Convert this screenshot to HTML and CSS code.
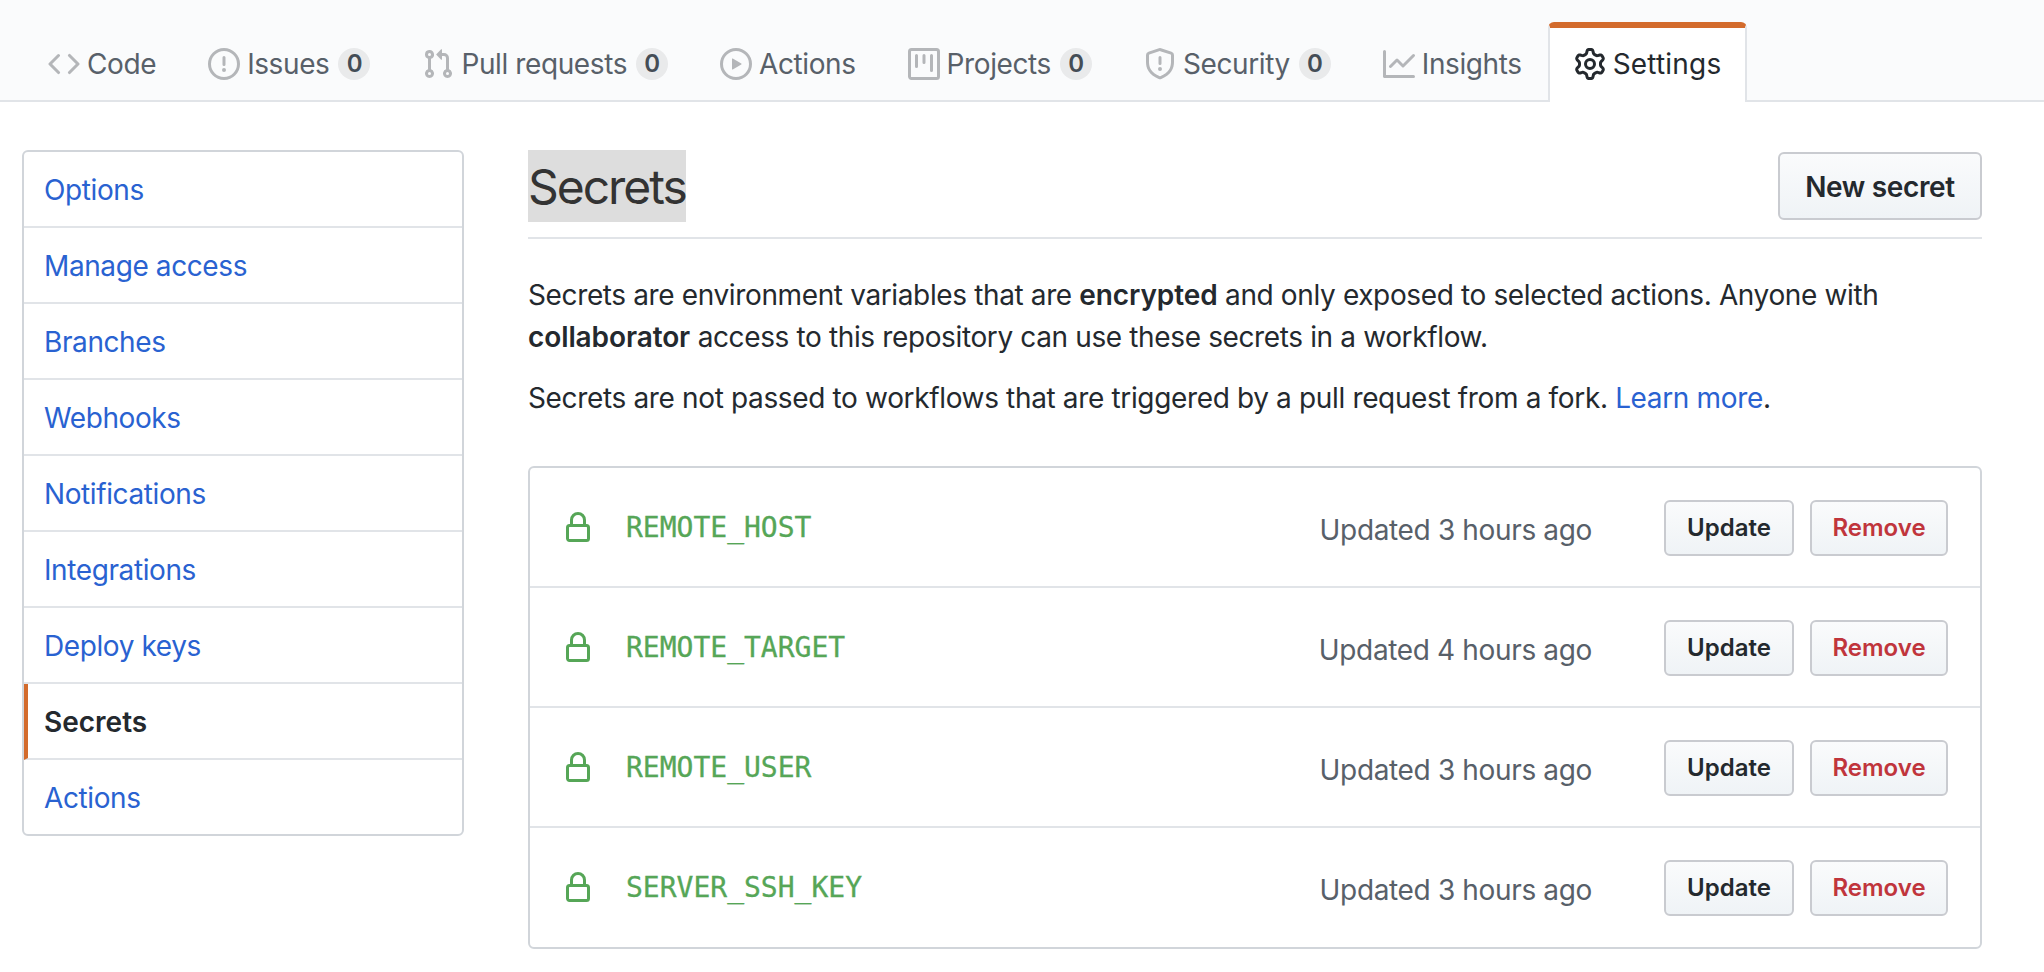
FILE: index.html
```html
<!DOCTYPE html>
<html lang="en">
<head>
<meta charset="utf-8">
<title>Secrets</title>
<link rel="stylesheet" href="styles.css">
</head>
<body>
<svg class="defs" aria-hidden="true"><symbol id="lock" viewBox="0 0 16 16"><path fill-rule="evenodd" d="M4 4v2h-.25A1.75 1.75 0 002 7.75v5.5c0 .966.784 1.75 1.75 1.75h8.5A1.75 1.75 0 0014 13.25v-5.5A1.75 1.75 0 0012.25 6H12V4a4 4 0 10-8 0zm6.5 2V4a2.5 2.5 0 00-5 0v2h5zM12 7.5h.25a.25.25 0 01.25.25v5.5a.25.25 0 01-.25.25h-8.5a.25.25 0 01-.25-.25v-5.5a.25.25 0 01.25-.25H12z"/></symbol></svg>
<nav class="tabs">
  <a class="tab"><svg class="ticon" viewBox="0 0 16 16"><path fill-rule="evenodd" d="M4.72 3.22a.75.75 0 011.06 1.06L2.06 8l3.72 3.72a.75.75 0 11-1.06 1.06L.47 8.53a.75.75 0 010-1.06l4.25-4.25zm6.56 0a.75.75 0 10-1.06 1.06L13.94 8l-3.72 3.72a.75.75 0 101.06 1.06l4.25-4.25a.75.75 0 000-1.06l-4.25-4.25z"/></svg>Code</a>
  <a class="tab"><svg class="ticon" viewBox="0 0 16 16"><path fill-rule="evenodd" d="M8 1.5a6.5 6.5 0 100 13 6.5 6.5 0 000-13zM0 8a8 8 0 1116 0A8 8 0 010 8zm9 3a1 1 0 11-2 0 1 1 0 012 0zm-.25-6.25a.75.75 0 00-1.5 0v3.5a.75.75 0 001.5 0v-3.5z"/></svg>Issues<span class="count">0</span></a>
  <a class="tab"><svg class="ticon" viewBox="0 0 16 16"><path fill-rule="evenodd" d="M7.177 3.073L9.573.677A.25.25 0 0110 .854v4.792a.25.25 0 01-.427.177L7.177 3.427a.25.25 0 010-.354zM3.75 2.5a.75.75 0 100 1.5.75.75 0 000-1.5zm-2.25.75a2.25 2.25 0 113 2.122v5.256a2.251 2.251 0 11-1.5 0V5.372A2.25 2.25 0 011.5 3.25zM11 2.5h-1V4h1a1 1 0 011 1v5.628a2.251 2.251 0 101.5 0V5A2.5 2.5 0 0011 2.5zm1 10.25a.75.75 0 111.5 0 .75.75 0 01-1.5 0zM3.75 12a.75.75 0 100 1.5.75.75 0 000-1.5z"/></svg>Pull requests<span class="count">0</span></a>
  <a class="tab"><svg class="ticon" viewBox="0 0 16 16"><path fill-rule="evenodd" d="M1.5 8a6.5 6.5 0 1113 0 6.5 6.5 0 01-13 0zM8 0a8 8 0 100 16A8 8 0 008 0zM6.379 5.227A.25.25 0 006 5.442v5.117a.25.25 0 00.379.214l4.264-2.559a.25.25 0 000-.428L6.379 5.227z"/></svg>Actions</a>
  <a class="tab"><svg class="ticon" viewBox="0 0 16 16"><path fill-rule="evenodd" d="M1.75 0A1.75 1.75 0 000 1.75v12.5C0 15.216.784 16 1.75 16h12.5A1.75 1.75 0 0016 14.25V1.75A1.75 1.75 0 0014.25 0H1.75zM1.5 1.75a.25.25 0 01.25-.25h12.5a.25.25 0 01.25.25v12.5a.25.25 0 01-.25.25H1.75a.25.25 0 01-.25-.25V1.75zM11.75 3a.75.75 0 00-.75.75v7.5a.75.75 0 001.5 0v-7.5a.75.75 0 00-.75-.75zm-8.25.75a.75.75 0 011.5 0v5.5a.75.75 0 01-1.5 0v-5.5zM8 3a.75.75 0 00-.75.75v3.5a.75.75 0 001.5 0v-3.5A.75.75 0 008 3z"/></svg>Projects<span class="count">0</span></a>
  <a class="tab"><svg class="ticon" viewBox="0 0 16 16"><path fill-rule="evenodd" d="M7.467.133a1.75 1.75 0 011.066 0l5.25 1.68A1.75 1.75 0 0115 3.48V7c0 1.566-.32 3.182-1.303 4.682-.983 1.498-2.585 2.813-5.032 3.855a1.7 1.7 0 01-1.33 0c-2.447-1.042-4.049-2.357-5.032-3.855C1.32 10.182 1 8.566 1 7V3.48a1.75 1.75 0 011.217-1.667l5.25-1.68zm.61 1.429a.25.25 0 00-.153 0l-5.25 1.68a.25.25 0 00-.174.238V7c0 1.358.275 2.666 1.057 3.86.784 1.194 2.121 2.34 4.366 3.297a.2.2 0 00.154 0c2.245-.956 3.582-2.104 4.366-3.298C13.225 9.666 13.5 8.36 13.5 7V3.48a.25.25 0 00-.174-.237l-5.25-1.68zM9 10.5a1 1 0 11-2 0 1 1 0 012 0zm-.25-5.75a.75.75 0 10-1.5 0v3a.75.75 0 001.5 0v-3z"/></svg>Security<span class="count">0</span></a>
  <a class="tab"><svg class="ticon" viewBox="0 0 16 16"><path fill-rule="evenodd" d="M1.5 1.75a.75.75 0 00-1.5 0v12.5c0 .414.336.75.75.75h14.5a.75.75 0 000-1.5H1.5V1.75zm14.28 2.53a.75.75 0 00-1.06-1.06L10 7.94 7.53 5.47a.75.75 0 00-1.06 0L3.22 8.72a.75.75 0 001.06 1.06L7 7.06l2.47 2.47a.75.75 0 001.06 0l5.25-5.25z"/></svg>Insights</a>
  <a class="tab tab-active"><svg class="ticon" viewBox="0 0 16 16"><path fill-rule="evenodd" d="M7.429 1.525a6.593 6.593 0 011.142 0c.036.003.108.036.137.146l.289 1.105c.147.56.55.967.997 1.189.174.086.341.183.501.29.417.278.97.423 1.53.27l1.102-.303c.11-.03.175.016.195.046.219.31.41.641.573.989.014.031.022.11-.059.19l-.815.806c-.411.406-.562.957-.53 1.456a4.588 4.588 0 010 .582c-.032.499.119 1.05.53 1.456l.815.806c.08.08.073.159.059.19a6.494 6.494 0 01-.573.99c-.02.029-.086.074-.195.045l-1.103-.303c-.559-.153-1.112-.008-1.529.27-.16.107-.327.204-.5.29-.449.222-.851.628-.998 1.189l-.289 1.105c-.029.11-.101.143-.137.146a6.613 6.613 0 01-1.142 0c-.036-.003-.108-.037-.137-.146l-.289-1.105c-.147-.56-.55-.967-.997-1.189a4.502 4.502 0 01-.501-.29c-.417-.278-.97-.423-1.53-.27l-1.102.303c-.11.03-.175-.016-.195-.046a6.492 6.492 0 01-.573-.989c-.014-.031-.022-.11.059-.19l.815-.806c.411-.406.562-.957.53-1.456a4.587 4.587 0 010-.582c.032-.499-.119-1.05-.53-1.456l-.815-.806c-.08-.08-.073-.159-.059-.19a6.44 6.44 0 01.573-.99c.02-.029.086-.075.195-.045l1.103.303c.559.153 1.112.008 1.529-.27.16-.107.327-.204.5-.29.449-.222.851-.628.998-1.189l.289-1.105c.029-.11.101-.143.137-.146zM8 0c-.236 0-.47.01-.701.03-.743.065-1.29.615-1.458 1.261l-.29 1.106c-.017.066-.078.158-.211.224a5.994 5.994 0 00-.668.386c-.123.082-.233.09-.3.071L3.27 2.776c-.644-.177-1.392.02-1.82.63a7.977 7.977 0 00-.704 1.217c-.315.675-.111 1.422.363 1.891l.815.806c.05.048.098.147.088.294a6.084 6.084 0 000 .772c.01.147-.038.246-.088.294l-.815.806c-.474.469-.678 1.216-.363 1.891.2.428.436.835.704 1.218.428.609 1.176.806 1.82.63l1.103-.303c.066-.019.176-.011.299.071.213.143.436.272.668.386.133.066.194.158.212.224l.289 1.106c.169.646.715 1.196 1.458 1.26a8.094 8.094 0 001.402 0c.743-.064 1.29-.614 1.458-1.26l.29-1.106c.017-.066.078-.158.211-.224a5.98 5.98 0 00.668-.386c.123-.082.233-.09.3-.071l1.102.302c.644.177 1.392-.02 1.82-.63.268-.382.505-.789.704-1.217.315-.675.111-1.422-.364-1.891l-.814-.806c-.05-.048-.098-.147-.088-.294a6.1 6.1 0 000-.772c-.01-.147.039-.246.088-.294l.814-.806c.475-.469.679-1.216.364-1.891a7.992 7.992 0 00-.704-1.218c-.428-.609-1.176-.806-1.82-.63l-1.103.303c-.066.019-.176.011-.299-.071a5.991 5.991 0 00-.668-.386c-.133-.066-.194-.158-.212-.224L10.16 1.29C9.99.645 9.444.095 8.701.031A8.094 8.094 0 008 0zm1.5 8a1.5 1.5 0 11-3 0 1.5 1.5 0 013 0zM11 8a3 3 0 11-6 0 3 3 0 016 0z"/></svg>Settings</a>
</nav>
<div class="content">
  <aside class="menu">
    <a class="menu-item">Options</a>
    <a class="menu-item">Manage access</a>
    <a class="menu-item">Branches</a>
    <a class="menu-item">Webhooks</a>
    <a class="menu-item">Notifications</a>
    <a class="menu-item">Integrations</a>
    <a class="menu-item">Deploy keys</a>
    <a class="menu-item menu-active">Secrets</a>
    <a class="menu-item">Actions</a>
  </aside>
  <main class="main">
    <header class="head">
      <h2 class="title">Secrets</h2>
      <a class="btn btn-new">New secret</a>
    </header>
    <p class="para para-first">Secrets are environment variables that are <strong>encrypted</strong> and only exposed to selected actions. Anyone with <strong>collaborator</strong> access to this repository can use these secrets in a workflow.</p>
    <p class="para">Secrets are not passed to workflows that are triggered by a pull request from a fork. <a class="link">Learn more</a>.</p>
    <div class="box">
      <div class="row"><svg class="lock"><use href="#lock"/></svg><code class="name">REMOTE_HOST</code><span class="time">Updated 3 hours ago</span><a class="btn btn-sm">Update</a><a class="btn btn-sm btn-danger">Remove</a></div>
      <div class="row"><svg class="lock"><use href="#lock"/></svg><code class="name">REMOTE_TARGET</code><span class="time">Updated 4 hours ago</span><a class="btn btn-sm">Update</a><a class="btn btn-sm btn-danger">Remove</a></div>
      <div class="row"><svg class="lock"><use href="#lock"/></svg><code class="name">REMOTE_USER</code><span class="time">Updated 3 hours ago</span><a class="btn btn-sm">Update</a><a class="btn btn-sm btn-danger">Remove</a></div>
      <div class="row"><svg class="lock"><use href="#lock"/></svg><code class="name">SERVER_SSH_KEY</code><span class="time">Updated 3 hours ago</span><a class="btn btn-sm">Update</a><a class="btn btn-sm btn-danger">Remove</a></div>
    </div>
  </main>
</div>
</body>
</html>
```
FILE: styles.css
```css
* { box-sizing: border-box; }
html, body { margin: 0; height: 972px; overflow: hidden; }
body {
  background: #fff;
  color: #24292e;
  font-family: Inter, "Liberation Sans", sans-serif;
  font-size: 28px;
  line-height: 42px;
  letter-spacing: -0.35px;
}
.defs { display: none; }

.tabs {
  display: flex;
  align-items: flex-end;
  height: 102px;
  padding-left: 22px;
  background: #fafbfc;
  border-bottom: 2px solid #e1e4e8;
}
.tab {
  display: flex;
  align-items: center;
  height: 78px;
  padding: 6px 26px 0;
  color: #586069;
  letter-spacing: -0.4px;
  white-space: nowrap;
}
.ticon {
  width: 32px;
  height: 32px;
  margin-right: 7px;
  fill: #b4b6b9;
  flex: none;
}
.count {
  display: inline-block;
  width: 32px;
  height: 32px;
  margin-left: 9px;
  border-radius: 16px;
  background: #e9eaeb;
  color: #444d56;
  font-size: 24px;
  font-weight: 600;
  line-height: 32px;
  text-align: center;
}
.tab-active {
  height: 80px;
  margin-bottom: -2px;
  padding: 0 24px 2px;
  background: #fff;
  color: #24292e;
  letter-spacing: 0.2px;
  border: 2px solid #e1e4e8;
  border-top: 6px solid #d36b2c;
  border-bottom: 0;
  border-radius: 6px 6px 0 0;
}
.tab-active .ticon { fill: #24292e; }

.content {
  display: flex;
  gap: 64px;
  padding: 48px 62px 0 22px;
}
.menu {
  flex: none;
  align-self: flex-start;
  width: 442px;
  border: 2px solid #d1d5da;
  border-radius: 6px;
  overflow: hidden;
}
.menu-item {
  display: block;
  padding: 17px 20px 15px;
  color: #2962d1;
  letter-spacing: -0.4px;
  border-bottom: 2px solid #e1e4e8;
}
.menu-item:last-child { border-bottom: 0; }
.menu-active {
  padding-left: 16px;
  color: #24292e;
  font-weight: 600;
  letter-spacing: 0;
  border-left: 4px solid #d36b2c;
}

.main { flex: 1; min-width: 0; }
.head {
  display: flex;
  align-items: center;
  justify-content: space-between;
  padding-bottom: 15px;
  border-bottom: 2px solid #e1e4e8;
  height: 89px;
}
.title {
  height: 72px;
  margin: 0;
  padding-top: 1px;
  background: #ddd;
  color: #333;
  font-size: 48px;
  font-weight: 400;
  line-height: 72px;
  letter-spacing: -2.05px;
}
.btn {
  display: block;
  border: 2px solid #c9cbd0;
  border-radius: 6px;
  background: linear-gradient(#fafbfc, #eff3f6);
  color: #24292e;
  font-weight: 600;
  text-align: center;
}
.btn-new { width: 204px; height: 68px; padding: 12px 0 10px; }
.para { margin: 0 0 16px; max-width: 1400px; }
.para-first { margin-top: 35px; margin-bottom: 19px; letter-spacing: -0.37px; }
.para strong { font-weight: 600; }
.para-first strong { letter-spacing: -0.1px; }
.link { color: #2962d1; }

.box {
  margin-top: 47px;
  border: 2px solid #d1d5da;
  border-radius: 6px;
}
.row {
  display: flex;
  align-items: center;
  padding: 32px 32px 30px;
  border-bottom: 2px solid #e1e4e8;
}
.row:last-child { border-bottom: 0; padding-bottom: 31px; }
.lock { width: 32px; height: 32px; margin-right: 32px; fill: #56a657; flex: none; }
.name {
  color: #56a657;
  font-family: "DejaVu Sans Mono", "Liberation Mono", monospace;
  font-size: 28px;
  letter-spacing: 0;
  -webkit-text-stroke: 0.3px #56a657;
}
.time { margin-left: auto; margin-right: 72px; padding-top: 4px; color: #586069; }
.btn-sm {
  height: 56px;
  width: 130px;
  font-size: 24px;
  line-height: 52px;
  letter-spacing: 0;
}
.btn-danger { width: 138px; margin-left: 16px; color: #c0353c; }
```
